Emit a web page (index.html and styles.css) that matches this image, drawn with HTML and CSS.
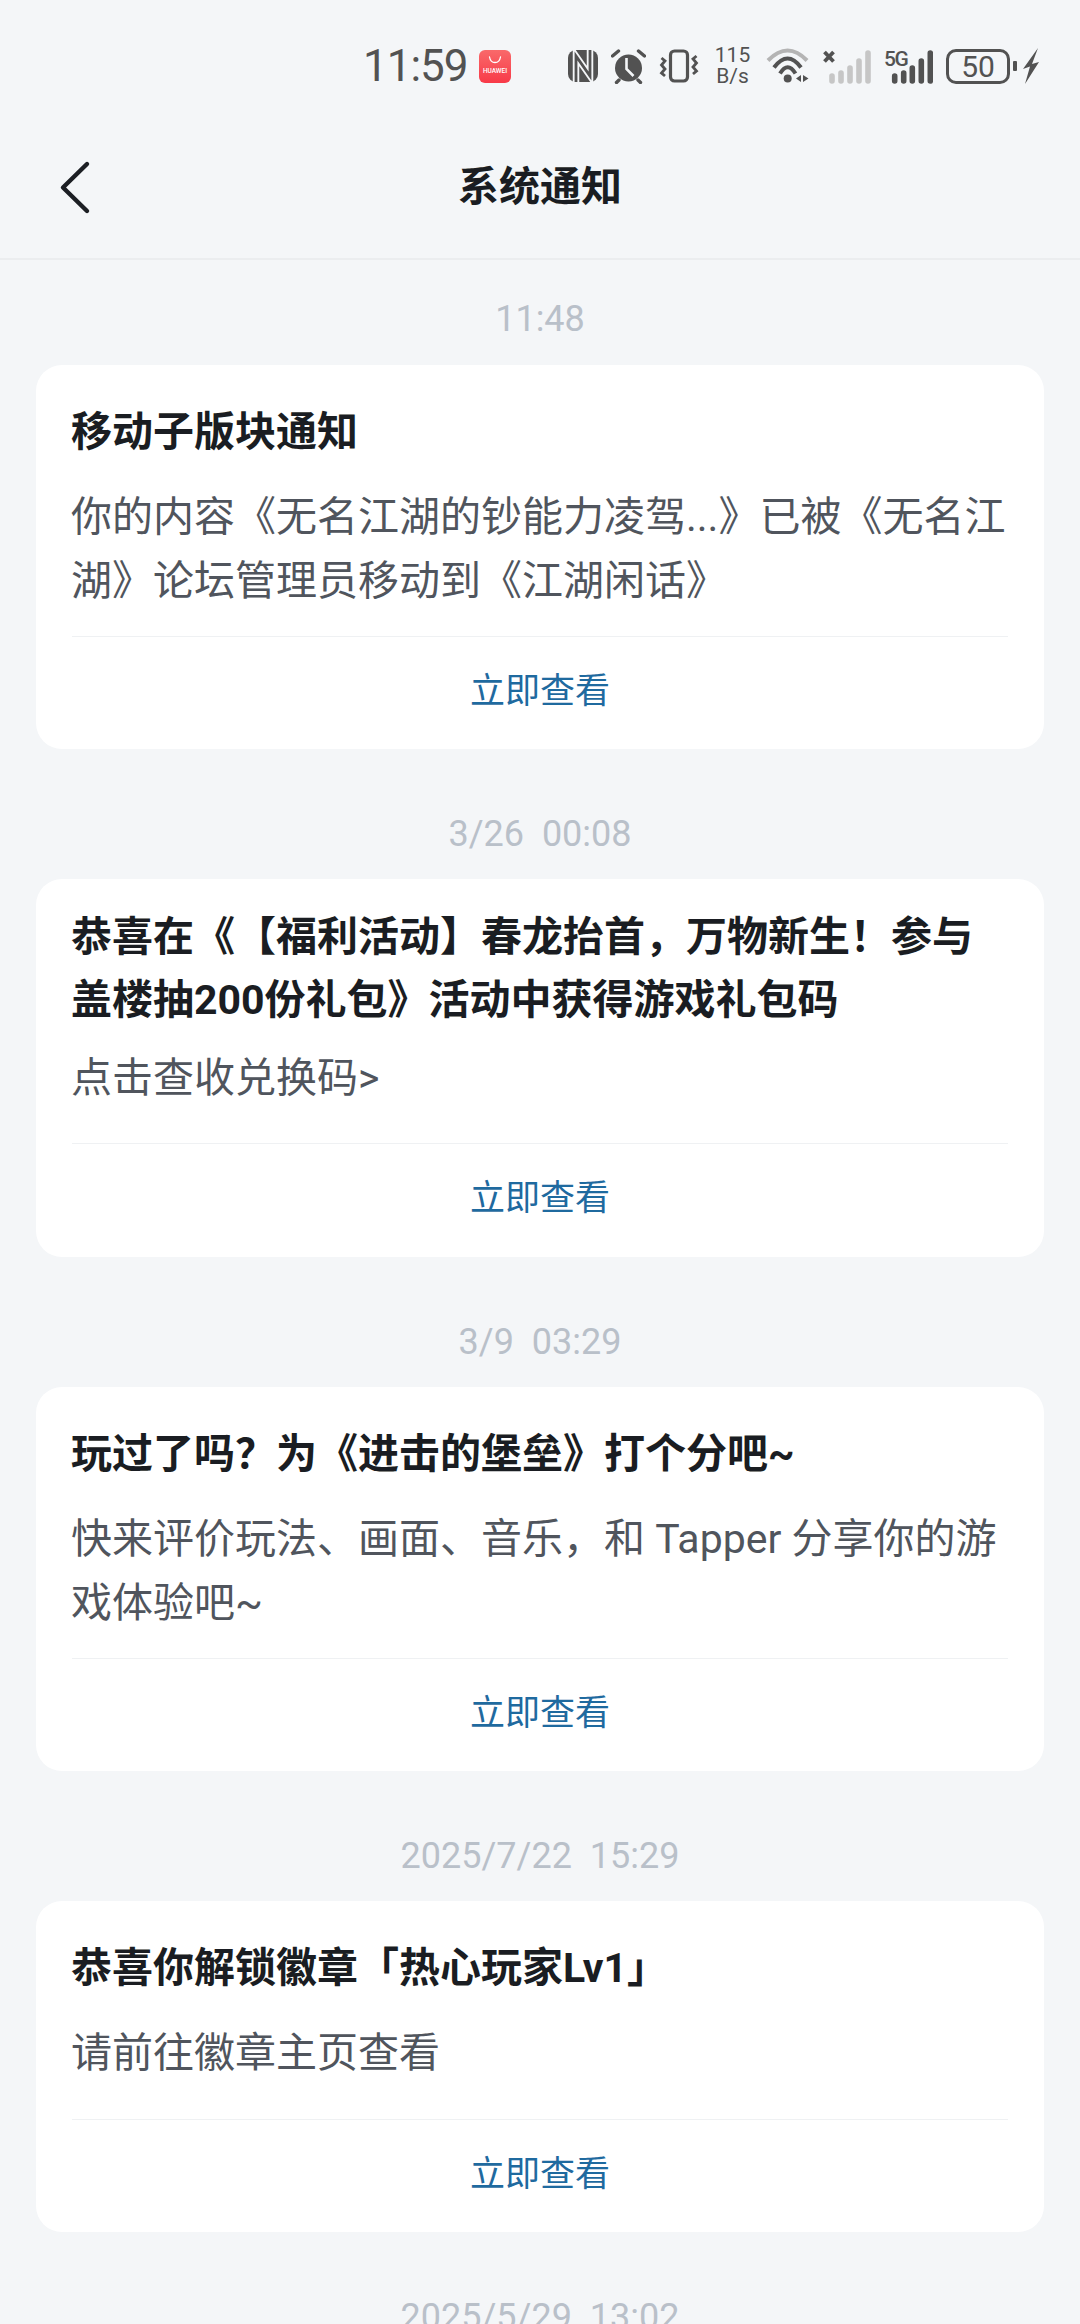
FILE: index.html
```html
<!DOCTYPE html>
<html lang="zh-CN">
<head>
    <meta charset="UTF-8">
    <title>系统通知</title>
    <link rel="stylesheet" href="styles.css">
</head>
<body>
    <div class="status-bar">
        <span class="clock">11:59</span>
        <div class="ic-huawei">
            <svg width="14" height="8" viewBox="0 0 14 8">
                <path d="M1.500 1c.6 3.500 3 5.500 5.500 5.500s4.900-2 5.500-5.500" fill="none" stroke="#fff" stroke-width="1.300" stroke-linecap="round"/>
            </svg>
            <span>HUAWEI</span>
        </div>
        <div class="status-icons">
            <svg width="30" height="32" viewBox="0 0 30 32">
                <rect width="30" height="32" rx="8" fill="#525252"/>
                <path d="M8 32V6l14 20V0" fill="none" stroke="#f4f6f8" stroke-width="6.500"/>
                <path d="M8 32V6l14 20V0" fill="none" stroke="#525252" stroke-width="2.800"/>
            </svg>
            <svg width="35" height="35" viewBox="0 0 35 35">
                <circle cx="17.500" cy="19" r="13.500" fill="#525252"/>
                <path d="M15.500 9v11l7 7" fill="none" stroke="#f4f6f8" stroke-width="2.600"/>
                <path d="M1.500 7l6-5M33.500 7l-6-5M8 31l-2.500 2.500M27 31l2.500 2.500" stroke="#525252" stroke-width="3.400" stroke-linecap="round" fill="none"/>
            </svg>
            <svg width="40" height="34" viewBox="0 0 40 34">
                <rect x="11.500" y="2" width="17" height="30" rx="4" fill="none" stroke="#525252" stroke-width="3.200"/>
                <path d="M2.500 9l3.500 3-3.500 4 3.500 4-3.500 4 3.500 3M37.500 7l-3.500 3 3.500 4-3.500 4 3.500 4-3.500 3" fill="none" stroke="#525252" stroke-width="2.800"/>
            </svg>
            <div class="net-speed"><span>115</span><span>B/s</span></div>
            <svg width="43" height="36" viewBox="0 0 43 36">
                <path d="M2 12.500Q21.700-7.500 41 12.500" fill="none" stroke="#b4b4b4" stroke-width="4"/>
                <path d="M8 19.500Q21.700 1.500 35 19.500" fill="none" stroke="#525252" stroke-width="4"/>
                <path d="M14 25.500Q21.700 13 29.500 25.500" fill="none" stroke="#525252" stroke-width="4"/>
                <circle cx="21.700" cy="30.500" r="4" fill="#525252"/>
                <path d="M35 27v7l-5-3.500zM37 27v7l5.500-3.500z" fill="#525252"/>
            </svg>
            <svg width="49" height="36" viewBox="0 0 49 36">
                <path d="M2.500 4l9 9.500M11.500 4l-9 9.500" stroke="#525252" stroke-width="3.800"/>
                <path d="M10 28v5M19 25v8M28 20v13M37 13v20M46 5v28" stroke="#c6c6c6" stroke-width="5.600" stroke-linecap="round"/>
            </svg>
            <div class="sim-two">
                <span class="five-g">5G</span>
                <svg width="49" height="36" viewBox="0 0 49 36">
                    <path d="M10.700 28v5M19.700 25v8M28.300 20v13M37.300 13v20M46.300 5v28" stroke="#525252" stroke-width="5.600" stroke-linecap="round"/>
                </svg>
            </div>
            <div class="battery">
                <div class="battery-body">50</div>
                <div class="battery-tip"></div>
                <svg width="16" height="36" viewBox="0 0 16 36">
                    <path d="M15 0L0 21l7-2.500L2 36l14-22-7 2z" fill="#525252"/>
                </svg>
            </div>
        </div>
    </div>

    <header class="nav">
        <svg class="back" width="32" height="55" viewBox="0 0 32 55">
            <path d="M28 4L4 27.500 28 51" fill="none" stroke="#1c1f24" stroke-width="4.400" stroke-linecap="round" stroke-linejoin="round"/>
        </svg>
        <h1>系统通知</h1>
    </header>

    <main class="list">
        <div class="time">11:48</div>
        <section class="card">
            <h2>移动子版块通知</h2>
            <p>你的内容《无名江湖的钞能力凌驾...》已被《无名江湖》论坛管理员移动到《江湖闲话》</p>
            <a class="more">立即查看</a>
        </section>

        <div class="time">3/26&nbsp;&nbsp;00:08</div>
        <section class="card card-long-title">
            <h2>恭喜在《【福利活动】春龙抬首，万物新生！参与盖楼抽200份礼包》活动中获得游戏礼包码</h2>
            <p>点击查收兑换码&gt;</p>
            <a class="more">立即查看</a>
        </section>

        <div class="time">3/9&nbsp;&nbsp;03:29</div>
        <section class="card">
            <h2>玩过了吗？为《进击的堡垒》打个分吧~</h2>
            <p>快来评价玩法、画面、音乐，和 Tapper 分享你的游戏体验吧~</p>
            <a class="more">立即查看</a>
        </section>

        <div class="time">2025/7/22&nbsp;&nbsp;15:29</div>
        <section class="card card-short">
            <h2>恭喜你解锁徽章「热心玩家Lv1」</h2>
            <p>请前往徽章主页查看</p>
            <a class="more">立即查看</a>
        </section>

        <div class="time">2025/5/29&nbsp;&nbsp;13:02</div>
    </main>
</body>
</html>
```

FILE: styles.css
```css
html, body {
    height: 2324px;
    overflow: hidden;
}

body {
    margin: 0;
    font-family: Roboto, "Noto Sans CJK SC", sans-serif;
    background-color: #f4f6f8;
    color: #1a1d22;
    text-spacing-trim: space-all;
}

.status-bar {
    display: flex;
    align-items: center;
    height: 132px;
    padding-left: 363px;
    box-sizing: border-box;
    color: #525252;
}

.clock {
    width: 116px;
    font-size: 44px;
    letter-spacing: -1px;
}

.ic-huawei {
    display: flex;
    flex-direction: column;
    align-items: center;
    gap: 3px;
    width: 32px;
    height: 33px;
    padding-top: 6px;
    box-sizing: border-box;
    border-radius: 6px;
    background: linear-gradient(#f9696a, #f83a48);
    color: white;
}

.ic-huawei span {
    font-size: 6.500px;
    font-weight: 500;
    line-height: 8px;
}

.status-icons {
    display: flex;
    align-items: center;
    gap: 13px;
    margin-left: 57px;
}

.net-speed {
    display: flex;
    flex-direction: column;
    align-items: center;
    width: 37px;
    margin: 0 2px;
    font-size: 21px;
    line-height: 21px;
}

.sim-two {
    position: relative;
}

.sim-two svg {
    display: block;
}

.five-g {
    position: absolute;
    left: 0;
    top: 0;
    font-size: 21px;
    font-weight: 500;
    line-height: 22px;
    letter-spacing: -1.500px;
}

.battery {
    display: flex;
    align-items: center;
}

.battery-body {
    width: 64px;
    height: 35px;
    box-sizing: border-box;
    border: 3px solid #525252;
    border-radius: 10px;
    font-size: 30px;
    line-height: 29px;
    text-align: center;
}

.battery-tip {
    width: 4px;
    height: 10px;
    margin: 0 6px 0 3px;
    border-radius: 1px;
    background-color: #525252;
}

.nav {
    position: relative;
    display: flex;
    justify-content: center;
    height: 126px;
    border-bottom: 2px solid #ebedef;
}

.back {
    position: absolute;
    left: 59px;
    top: 28px;
}

.nav h1 {
    margin: 0;
    font-size: 41px;
    font-weight: 700;
    line-height: 110px;
}

.list {
    display: flex;
    flex-direction: column;
    padding: 0 36px;
}

.time {
    padding: 62px 0 22px;
    text-align: center;
    font-size: 36px;
    line-height: 46px;
    color: #b9c0c9;
}

.list > .time:first-child {
    padding-top: 36px;
    padding-bottom: 23px;
}

.card {
    display: flex;
    flex-direction: column;
    padding: 0 36px;
    background-color: white;
    border-radius: 26px;
}

.card h2 {
    margin: 0 0 0 -1px;
    padding-top: 36px;
    font-size: 41px;
    line-height: 62px;
    font-weight: 700;
}

.card p {
    margin: 0 0 0 -1px;
    padding: 22px 0 23px;
    font-size: 41px;
    line-height: 64px;
    color: #50555d;
}

.card-long-title h2 {
    padding-top: 27px;
    line-height: 63px;
}

.card-long-title p {
    padding: 14px 0 33px;
}

.card-long-title .more {
    padding-bottom: 33px;
}

.card-short p {
    padding-bottom: 34px;
}

.more {
    padding: 30px 0 32px;
    border-top: 1px solid #eff1f3;
    text-align: center;
    font-size: 35px;
    line-height: 50px;
    color: #1f6a9f;
}
```
